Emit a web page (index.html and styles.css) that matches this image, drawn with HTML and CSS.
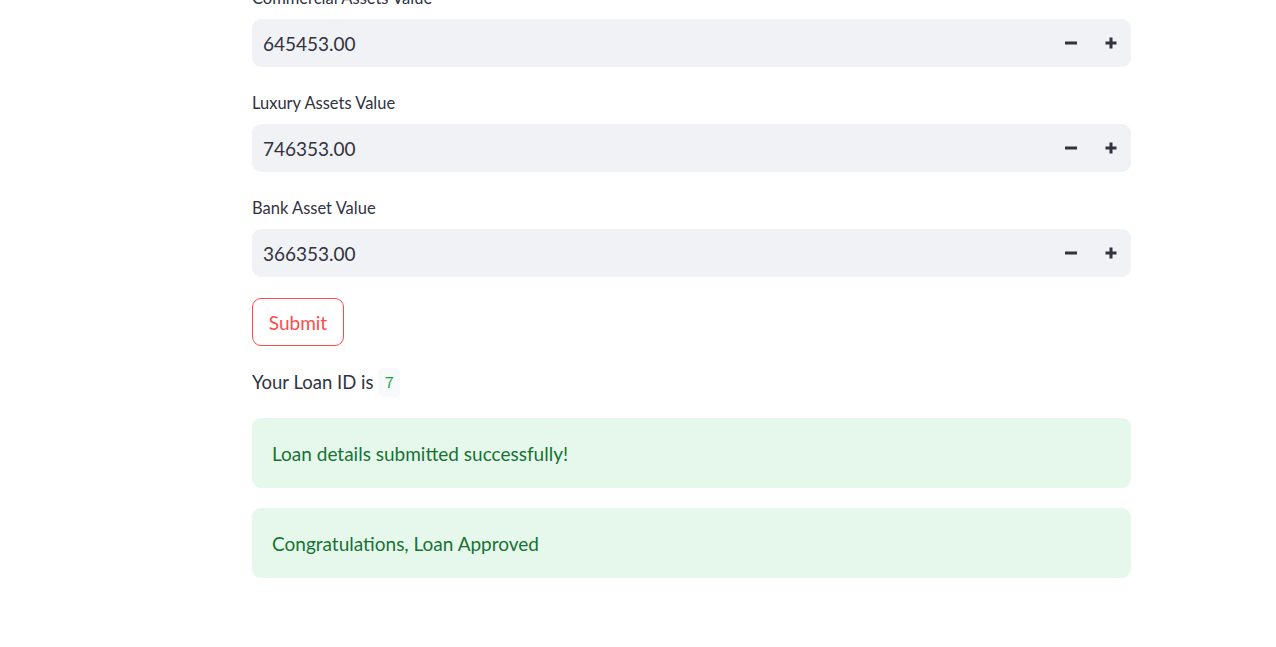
FILE: index.html
```html
<!DOCTYPE html>
<html>
<head>
<meta charset="utf-8">
<link rel="stylesheet" href="styles.css">
</head>
<body>
<main class="main">
  <div class="field">
    <label class="label">Commercial Assets Value</label>
    <div class="num-input">
      <span class="value">645453.00</span>
      <button class="step" aria-label="minus"><svg width="14" height="14" viewBox="0 0 14 14"><rect x="1" y="5.5" width="12" height="3" fill="#31333f"/></svg></button>
      <button class="step" aria-label="plus"><svg width="14" height="14" viewBox="0 0 14 14"><rect x="1.5" y="5.5" width="11" height="3" fill="#31333f"/><rect x="5.5" y="1.5" width="3" height="11" fill="#31333f"/></svg></button>
    </div>
  </div>
  <div class="field">
    <label class="label">Luxury Assets Value</label>
    <div class="num-input">
      <span class="value">746353.00</span>
      <button class="step" aria-label="minus"><svg width="14" height="14" viewBox="0 0 14 14"><rect x="1" y="5.5" width="12" height="3" fill="#31333f"/></svg></button>
      <button class="step" aria-label="plus"><svg width="14" height="14" viewBox="0 0 14 14"><rect x="1.5" y="5.5" width="11" height="3" fill="#31333f"/><rect x="5.5" y="1.5" width="3" height="11" fill="#31333f"/></svg></button>
    </div>
  </div>
  <div class="field">
    <label class="label">Bank Asset Value</label>
    <div class="num-input">
      <span class="value">366353.00</span>
      <button class="step" aria-label="minus"><svg width="14" height="14" viewBox="0 0 14 14"><rect x="1" y="5.5" width="12" height="3" fill="#31333f"/></svg></button>
      <button class="step" aria-label="plus"><svg width="14" height="14" viewBox="0 0 14 14"><rect x="1.5" y="5.5" width="11" height="3" fill="#31333f"/><rect x="5.5" y="1.5" width="3" height="11" fill="#31333f"/></svg></button>
    </div>
  </div>
  <button class="submit">Submit</button>
  <p class="loan-id"><span>Your Loan ID is</span><code class="code">7</code></p>
  <div class="alert">Loan details submitted successfully!</div>
  <div class="alert">Congratulations, Loan Approved</div>
</main>
</body>
</html>
```
FILE: styles.css
```css
* { box-sizing: border-box; }
html, body { margin: 0; padding: 0; background: #ffffff; }
body {
  font-family: "Source Sans Pro", Lato, "Noto Sans", sans-serif;
  color: #31333f;
  overflow: hidden;
}
.main {
  margin-left: 252px;
  width: 879px;
  margin-top: -12px;
  display: flex;
  flex-direction: column;
}
.field { display: flex; flex-direction: column; margin-bottom: 26px; }
.field:nth-child(3) { margin-bottom: 21px; }
.label {
  font-size: 16.5px;
  line-height: 20px;
  height: 20px;
  margin-bottom: 11px;
  color: #31333f;
}
.num-input {
  height: 48px;
  background: #f0f2f6;
  border-radius: 9px;
  display: flex;
  align-items: center;
  padding-left: 11px;
}
.value { flex: 1; font-size: 19px; color: #31333f; }
.step {
  width: 40px;
  height: 48px;
  border: 0;
  background: transparent;
  padding: 0;
  display: flex;
  align-items: center;
  justify-content: center;
}
.submit {
  align-self: flex-start;
  height: 48px;
  width: 92px;
  border: 1px solid #ff4b4b;
  border-radius: 9px;
  background: #fff;
  color: #ff4b4b;
  font-family: inherit;
  font-size: 19px;
  padding: 0;
  margin-bottom: 22px;
}
.loan-id {
  margin: 0 0 22px 0;
  height: 28px;
  display: flex;
  align-items: center;
  gap: 5px;
  font-size: 18.5px;
}
.code {
  display: inline-block;
  background: #f8f9fb;
  color: #09ab3b;
  font-family: "Source Code Pro", "Noto Sans", sans-serif;
  font-size: 16px;
  line-height: 29px;
  height: 29px;
  padding: 0 6px;
  border-radius: 5px;
}
.alert {
  height: 70px;
  background: #e6f8ec;
  border-radius: 9px;
  color: #177233;
  font-size: 19px;
  padding: 0 20px;
  display: flex;
  align-items: center;
  margin-bottom: 20px;
}
```
